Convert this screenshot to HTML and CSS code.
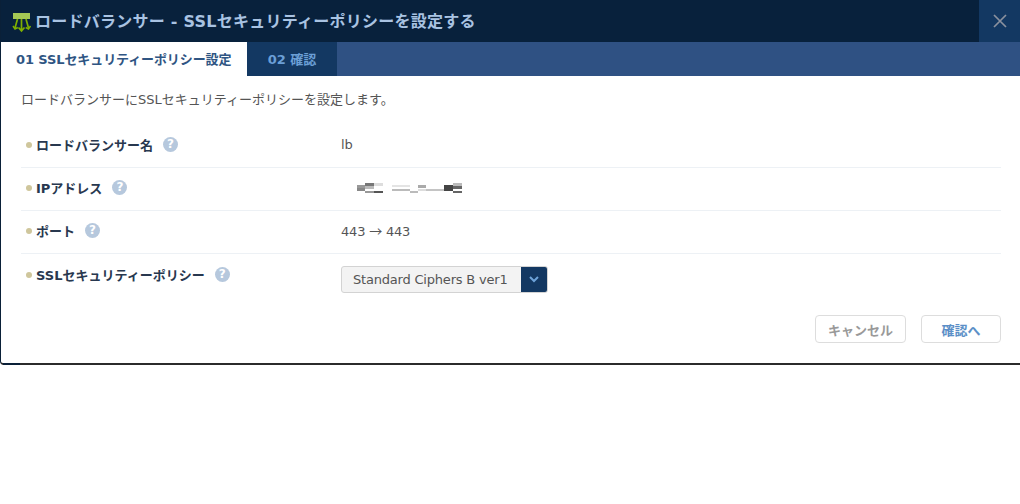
FILE: index.html
```html
<!DOCTYPE html>
<html lang="ja">
<head>
<meta charset="utf-8">
<title>SSLセキュリティーポリシー</title>
<link rel="stylesheet" href="styles.css">
</head>
<body>
<div class="dialog">
  <header class="titlebar">
    <svg class="logo" width="20" height="21" viewBox="0 0 20 21">
      <rect x="1" y="1" width="17" height="6" fill="#a5c855"/>
      <path d="M9.500 7v12M6.500 15.500l3 3.500 3-3.500" fill="none" stroke="#7fb000" stroke-width="1.700"/>
      <path d="M5.500 7l-2.500 9M14 7l2.500 9" fill="none" stroke="#7fb000" stroke-width="1.700"/>
      <path d="M1 14l2 3 2.800-1.500M18.500 14l-2 3-2.800-1.500" fill="none" stroke="#7fb000" stroke-width="1.500"/>
    </svg>
    <h1 class="title">ロードバランサー - SSLセキュリティーポリシーを設定する</h1>
    <div class="close">
      <svg width="14" height="14" viewBox="0 0 14 14"><path d="M1 1l12 12M13 1L1 13" fill="none" stroke="#8a919e" stroke-width="1.700"/></svg>
    </div>
  </header>
  <nav class="tabs">
    <div class="tab tab-active">01 SSLセキュリティーポリシー設定</div>
    <div class="tab tab-next">02 確認</div>
  </nav>
  <main class="content">
    <p class="lead">ロードバランサーにSSLセキュリティーポリシーを設定します。</p>
    <div class="row">
      <div class="label"><i class="dot"></i><b>ロードバランサー名</b><i class="help">?</i></div>
      <div class="value">lb</div>
    </div>
    <div class="row">
      <div class="label"><i class="dot"></i><b>IPアドレス</b><i class="help">?</i></div>
      <div class="value">
        <svg class="masked" width="108" height="12" viewBox="0 0 108 12" shape-rendering="crispEdges">
          <rect x="0" y="3" width="8" height="3" fill="#999"/><rect x="8" y="1" width="9" height="3" fill="#777"/><rect x="17" y="1" width="9" height="3" fill="#ddd"/>
          <rect x="0" y="6" width="8" height="3" fill="#888"/><rect x="8" y="4" width="9" height="3" fill="#bbb"/>
          <rect x="8" y="9" width="9" height="2" fill="#999"/><rect x="17" y="9" width="9" height="2" fill="#555"/>
          <rect x="35" y="3" width="18" height="2" fill="#e4e4e4"/><rect x="35" y="7" width="18" height="2" fill="#bbb"/><rect x="53" y="9" width="8" height="2" fill="#bbb"/>
          <rect x="61" y="3" width="8" height="3" fill="#aaa"/><rect x="61" y="7" width="8" height="2" fill="#ddd"/><rect x="69" y="7" width="18" height="2" fill="#c4c4c4"/>
          <rect x="87" y="3" width="9" height="6" fill="#444"/><rect x="96" y="1" width="9" height="3" fill="#bbb"/><rect x="96" y="4" width="9" height="3" fill="#666"/><rect x="96" y="9" width="9" height="2" fill="#666"/>
        </svg>
      </div>
    </div>
    <div class="row">
      <div class="label"><i class="dot"></i><b>ポート</b><i class="help">?</i></div>
      <div class="value">443 <span class="arrow">→</span> 443</div>
    </div>
    <div class="row row-last">
      <div class="label"><i class="dot"></i><b>SSLセキュリティーポリシー</b><i class="help">?</i></div>
      <div class="value">
        <div class="select">
          <span class="select-text">Standard Ciphers B ver1</span>
          <span class="select-arrow"><svg width="10" height="7" viewBox="0 0 10 7"><path d="M1 1l4 4 4-4" fill="none" stroke="#6ea3d8" stroke-width="2"/></svg></span>
        </div>
      </div>
    </div>
    <div class="actions">
      <div class="btn btn-cancel">キャンセル</div>
      <div class="btn btn-next">確認へ</div>
    </div>
  </main>
</div>
</body>
</html>
```
FILE: styles.css
```css
* { box-sizing: border-box; }
html, body { margin: 0; padding: 0; background: #fff; }
body {
  font-family: "DejaVu Sans", "Noto Sans CJK JP", sans-serif;
  font-size: 13px;
  color: #555;
  width: 1020px;
  height: 504px;
  overflow: hidden;
}
.dialog {
  position: relative;
  height: 365px;
  border-left: 1px solid #0a2038;
  border-bottom: 2px solid #2b2b2b;
  border-bottom-left-radius: 4px;
  display: flex;
  flex-direction: column;
}
.dialog::after {
  content: "";
  position: absolute;
  left: 2px;
  bottom: -2px;
  width: 17px;
  height: 2px;
  background: #0a2038;
}
.titlebar {
  height: 42px;
  flex: none;
  background: #08213c;
  display: flex;
  align-items: center;
  padding-left: 11px;
}
.logo { flex: none; margin-right: 3px; margin-top: 3px; }
.title {
  margin: 0 0 2px;
  flex: 1;
  font-size: 16px;
  font-weight: 700;
  letter-spacing: 0.25px;
  color: #a9c3e2;
  white-space: nowrap;
}
.close {
  width: 41px;
  height: 42px;
  background: #133862;
  display: flex;
  align-items: center;
  justify-content: center;
}
.tabs {
  height: 34px;
  flex: none;
  background: #2f5183;
  display: flex;
  font-size: 13px;
  font-weight: 700;
}
.tab { display: flex; align-items: center; white-space: nowrap; padding-bottom: 2px; }
.tab-active { width: 246px; padding-left: 15px; background: #fff; color: #2f5583; letter-spacing: -0.1px; }
.tab-next { width: 90px; justify-content: center; background: #133862; color: #6b9fd6; }
.content { flex: 1; padding: 0 19px 0 20px; }
.lead { margin: 15px 0 0; height: 34px; line-height: 18px; }
.row {
  height: 43px;
  padding-bottom: 3px;
  display: flex;
  align-items: center;
  border-bottom: 1px solid #edf1f5;
}
.row-last { border-bottom: 0; height: 45px; padding: 0; align-items: flex-start; }
.row-last .label { padding-top: 11px; }
.row-last .value { padding-top: 12px; }
.label { width: 320px; flex: none; display: flex; align-items: center; padding-left: 5px; color: #28384f; }
.label b { font-weight: 700; }
.dot { width: 6px; height: 6px; border-radius: 50%; background: #cfc69c; margin-right: 4px; flex: none; }
.help {
  width: 15px;
  height: 15px;
  margin-left: 10px;
  border-radius: 50%;
  background: #b6c8dd;
  color: #fff;
  font: 700 12px/15px "DejaVu Sans", sans-serif;
  text-align: center;
}
.value { color: #555; letter-spacing: -0.2px; }
.arrow { font-family: "Noto Sans CJK JP", sans-serif; }
.masked { display: block; margin-left: 16px; }
.select {
  width: 207px;
  height: 27px;
  border: 1px solid #d3d3d3;
  border-radius: 3px;
  background: #f3f3f3;
  display: flex;
  overflow: hidden;
}
.select-text { flex: 1; padding-left: 11px; line-height: 25px; color: #555; }
.select-arrow { width: 26px; background: #133862; display: flex; align-items: center; justify-content: center; }
.actions { display: flex; justify-content: flex-end; gap: 15px; margin-top: 16px; }
.btn {
  height: 28px;
  border: 1px solid #ddd;
  border-radius: 4px;
  font-weight: 700;
  display: flex;
  align-items: center;
  justify-content: center;
  background: #fff;
}
.btn-cancel { width: 91px; color: #999; }
.btn-next { width: 80px; color: #5b8fc7; }
```
